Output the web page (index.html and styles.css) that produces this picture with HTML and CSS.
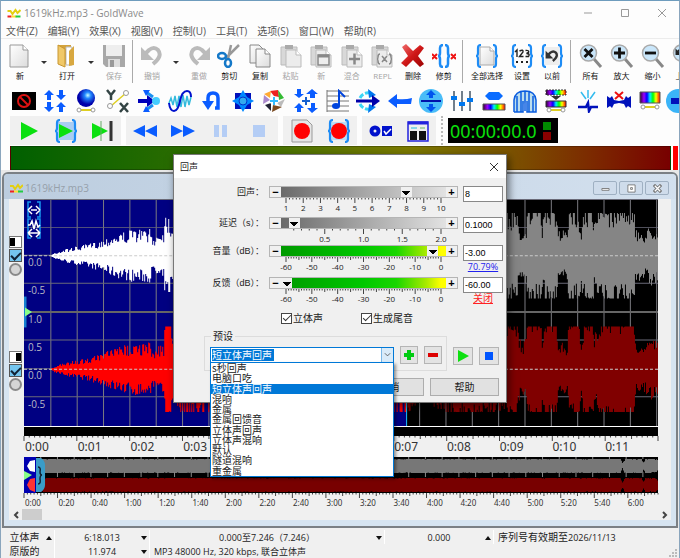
FILE: index.html
```html
<!DOCTYPE html>
<html lang="zh-CN">
<head>
<meta charset="utf-8">
<title>1619kHz.mp3 - GoldWave</title>
<link rel="stylesheet" href="styles.css">
</head>
<body>
<svg class="defs" aria-hidden="true">
  <defs>
    <linearGradient id="paper" x2="1" y2="1"><stop offset="0" stop-color="#fff"/><stop offset="1" stop-color="#dcdcdc"/></linearGradient>
    <linearGradient id="cross" x2="1" y2="1"><stop offset="0" stop-color="#f07070"/><stop offset=".5" stop-color="#d01818"/><stop offset="1" stop-color="#900"/></linearGradient>
    <linearGradient id="spectrum"><stop offset="0" stop-color="#303"/><stop offset=".2" stop-color="#90f"/><stop offset=".35" stop-color="#00f"/><stop offset=".5" stop-color="#0ef"/><stop offset=".65" stop-color="#0f0"/><stop offset=".8" stop-color="#ff0"/><stop offset="1" stop-color="#f00"/></linearGradient>
    <radialGradient id="ball" cx=".6" cy=".35"><stop offset="0" stop-color="#cff"/><stop offset=".35" stop-color="#28f"/><stop offset="1" stop-color="#00a"/></radialGradient>
    <symbol id="logo" viewBox="0 0 13 10"><path d="M0 3l3 0 2 3 3-4 2 3 3-3" fill="none" stroke="#e3cf10" stroke-width="2"/><path d="M0 8.500h4" stroke="#e22" stroke-width="2"/><path d="M4 8.500h5" stroke="#fd3" stroke-width="2"/><path d="M8 8.500h5" stroke="#2c4" stroke-width="2"/></symbol>
    <symbol id="braces" viewBox="0 0 24 24"><path d="M6 1q-3 0-3 3v5q0 3-2 3 2 0 2 3v5q0 3 3 3M18 1q3 0 3 3v5q0 3 2 3-2 0-2 3v5q0 3-3 3" fill="none" stroke="#1e8cf5" stroke-width="2.200"/></symbol>
    <symbol id="clip" viewBox="0 0 24 24"><path d="M2 3h16v18H2z" fill="#d8d8d8" stroke="#bbb"/><path d="M6 1h8v4H6z" fill="#aaa"/><path d="M7 6h10l5 5v12H7z" fill="#ececec" stroke="#bbb"/><path d="M17 6v5h5" fill="#fff" stroke="#bbb"/></symbol>
    <symbol id="lens" viewBox="0 0 24 24"><path d="M15 15l7 8" stroke="#888" stroke-width="3"/><circle cx="9.500" cy="9" r="8" fill="#c9e6fa" stroke="#aaa" stroke-width="1.500"/></symbol>
    <symbol id="undo" viewBox="0 0 24 24"><path d="M6 9l3-3q5-4 9 0 5 6-5 14" fill="none" stroke="currentColor" stroke-width="4"/><path d="M1 3v13h13z" fill="currentColor"/></symbol>
    <symbol id="rod" viewBox="0 0 20 6"><path d="M3 3h14" stroke="#dfcf20" stroke-width="2"/><circle cx="3" cy="3" r="2" fill="#fff" stroke="#999"/><circle cx="17" cy="3" r="2" fill="#fff" stroke="#999"/></symbol>
  </defs>
</svg>

<header class="titlebar">
  <svg class="logo"><use href="#logo"/></svg>
  <h1>1619kHz.mp3 - GoldWave</h1>
  <div class="window-buttons">
    <button aria-label="最小化"><svg viewBox="0 0 10 10"><path d="M1 5h8"/></svg></button>
    <button aria-label="最大化"><svg viewBox="0 0 10 10"><path d="M1.500 1.500h7v7h-7z"/></svg></button>
    <button aria-label="关闭"><svg viewBox="0 0 10 10"><path d="M1 1l8 8M9 1l-8 8"/></svg></button>
  </div>
</header>
<nav class="menu">
  <button>文件(Z)</button><button>编辑(Y)</button><button>效果(X)</button><button>视图(V)</button><button>控制(U)</button><button>工具(T)</button><button>选项(S)</button><button>窗口(W)</button><button>帮助(R)</button>
</nav>

<div class="toolbar">
  <button class="tool"><svg viewBox="0 0 24 24"><path d="M2 1h13l5 5v17H2z" fill="url(#paper)" stroke="#999"/><path d="M15 1v5h5" fill="#fff" stroke="#999"/></svg>新</button>
  <button class="more" aria-label="新建选项"></button>
  <button class="tool"><svg viewBox="0 0 24 24"><path d="M3 1h13v19H3z" fill="#d3a23c"/><path d="M11 3l6 0v18h-6z" fill="#fff" stroke="#bbb"/><path d="M3 1l7 4v18l-7-3z" fill="#f0c868" stroke="#c89630"/><path d="M14 7l5-5v19l-5 1z" fill="#d8a840"/></svg>打开</button>
  <button class="more" aria-label="打开选项"></button>
  <button class="tool" disabled><svg viewBox="0 0 24 24"><path d="M1 1h22v22H4l-3-3z" fill="#a8a8a8"/><path d="M4 1h16v11H4z" fill="#eee"/><path d="M6 15h12v8H6z" fill="#ddd"/><path d="M8 16h4v7H8z" fill="#999"/></svg>保存</button>
  <span class="rule"></span>
  <button class="tool" disabled><svg class="pale"><use href="#undo"/></svg>撤销</button>
  <button class="more" aria-label="撤销选项"></button>
  <button class="tool" disabled><svg class="pale" viewBox="0 0 24 24"><g transform="matrix(-1 0 0 1 24 0)"><use href="#undo" width="24" height="24"/></g></svg>重做</button>
  <div class="edit-group">
    <button class="tool"><svg viewBox="0 0 24 24"><path d="M22 1L8 15M14 1l-3 14" stroke="#999" stroke-width="2.500"/><ellipse cx="5" cy="12" rx="4" ry="3" fill="none" stroke="#1478c8" stroke-width="2.500"/><ellipse cx="11" cy="19" rx="3" ry="4" fill="none" stroke="#1478c8" stroke-width="2.500"/></svg>剪切</button>
    <button class="tool"><svg viewBox="0 0 24 24"><path d="M2 1h9l4 4v14H2z" fill="url(#paper)" stroke="#888"/><path d="M8 5h9l5 5v13H8z" fill="url(#paper)" stroke="#888"/><path d="M17 5v5h5" fill="#fff" stroke="#888"/></svg>复制</button>
    <button class="tool" disabled><svg><use href="#clip"/></svg>粘贴</button>
    <button class="tool" disabled><svg viewBox="0 0 24 24"><use href="#clip"/><path d="M9 11h11v10H9z" fill="#eee" stroke="#888" stroke-width="1.500"/><path d="M9 12h11" stroke="#888" stroke-width="3"/></svg>新</button>
    <button class="tool" disabled><svg viewBox="0 0 24 24"><use href="#clip"/><path d="M9 15h11M14.500 9.500v11" stroke="#888" stroke-width="2.500"/></svg>混合</button>
    <button class="tool" disabled><svg viewBox="0 0 24 24"><use href="#clip"/><path d="M10 10q-2 0-2 3 0 2-1 2 1 0 1 2 0 3 2 3M19 10q2 0 2 3 0 2 1 2-1 0-1 2 0 3-2 3M12 12l5 6M17 12l-5 6" fill="none" stroke="#888" stroke-width="1.500"/></svg>REPL</button>
    <button class="tool"><svg viewBox="0 0 24 24"><path d="M1 3l4-3 7 7 7-6 4 3-6 8 6 8-4 3-7-7-7 7-5-4 7-7z" fill="url(#cross)"/></svg>删除</button>
    <button class="tool"><svg viewBox="0 0 24 24"><path d="M11 1q-3 0-3 3v5q0 3-2 3 2 0 2 3v5q0 3 3 3M13 1q3 0 3 3v5q0 3 2 3-2 0-2 3v5q0 3-3 3" fill="none" stroke="#1e8cf5" stroke-width="2.500"/><path d="M0 10l5 5M5 10l-5 5M19 10l5 5M24 10l-5 5" stroke="#e11" stroke-width="2"/></svg>修剪</button>
  </div>
  <span class="rule"></span>
  <button class="tool wide"><svg viewBox="0 0 24 24"><path d="M5 3h10l4 4v14H5z" fill="url(#paper)" stroke="#aaa"/><path d="M15 3v4h4" fill="#fff" stroke="#aaa"/><use href="#braces"/></svg>全部选择</button>
  <button class="tool"><svg viewBox="0 0 24 24"><use href="#braces"/><path d="M5 8l2-2v7M9.500 7q4-2 3.500 1l-3.500 4.500h4M15.500 6.500q4-.5 3 2l-2 1q4 0 2 3h-3" fill="none" stroke="#222" stroke-width="1.400"/><path d="M6 18h2M11 18h2M16 18h2" stroke="#222" stroke-width="2"/></svg>设置</button>
  <button class="tool"><svg viewBox="0 0 24 24"><path d="M5 3h14v18H5z" fill="#eee"/><use href="#braces"/><g transform="translate(5 5) scale(.6)" color="#333"><use href="#undo" width="24" height="24"/></g></svg>以前</button>
  <span class="rule"></span>
  <div class="zoom-group">
    <button class="tool"><svg viewBox="0 0 24 24"><use href="#lens"/><path d="M5.500 5l8 8M13.500 5l-8 8" stroke="#111" stroke-width="2.800"/></svg>所有</button>
    <button class="tool"><svg viewBox="0 0 24 24"><use href="#lens"/><path d="M4 9h11M9.500 3.500v11" stroke="#111" stroke-width="2.800"/></svg>放大</button>
    <button class="tool"><svg viewBox="0 0 24 24"><use href="#lens"/><path d="M4 9h11" stroke="#111" stroke-width="2.800"/></svg>缩小</button>
    <button class="tool"><svg viewBox="0 0 24 24"><use href="#lens"/><g transform="translate(3 3) scale(.5)" color="#222"><use href="#undo" width="24" height="24"/></g></svg>上一</button>
  </div>
</div>

<div class="effects">
  <button aria-label="静音"><svg viewBox="0 0 24 24"><path d="M0 3h24v18H0z"/><circle cx="12" cy="12" r="6" fill="none" stroke="#d11" stroke-width="2"/><path d="M8 8l8 8" stroke="#d11" stroke-width="2"/></svg></button>
  <button aria-label="动态"><svg viewBox="0 0 24 24"><path d="M6 1l5 5H8v5H4V6H1zM18 13l5 5h-3v5h-4v-5h-3zM18 11l5-5h-3V1h-4v5h-3zM6 23l5-5H8v-5H4v5H1z" fill="#0a5cff"/></svg></button>
  <button aria-label="多普勒"><svg viewBox="0 0 24 24"><circle cx="12" cy="9" r="9" fill="url(#ball)"/><use href="#rod" x="2" y="18" width="20" height="6"/></svg></button>
  <button aria-label="动态曲线"><svg viewBox="0 0 24 24"><path d="M5 17L20 4" stroke="#dfcf20" stroke-width="1.500"/><circle cx="4" cy="17" r="2.500" fill="#fff" stroke="#999"/><circle cx="20" cy="4" r="2.500" fill="#fff" stroke="#999"/><path d="M1 1l4 5 4-5M5 6v5M14 14l8 9M22 14l-8 9" fill="none" stroke="#344" stroke-width="2.500"/></svg></button>
  <button aria-label="回声"><svg viewBox="0 0 24 24"><path d="M16 8L9 3M16 16l-7 5" stroke="#1a90f0" stroke-width="3"/><path d="M6 1h7l-4 6zM6 23h7l-4-6z" fill="#0a5cff"/><path d="M1 12h13" stroke="#00b" stroke-width="4"/><path d="M10 6l8 6-8 6z" fill="#00b"/><circle cx="19" cy="12" r="4" fill="#4cf"/></svg></button>
  <button aria-label="滤波"><svg viewBox="0 0 24 24" fill="none"><path d="M1 14l2-5 2 7 2-9 2 11 2-11 2 11 2-12 2 12 2-11 2 9 2-8" stroke="#3bd" stroke-width="1.500"/><path d="M1 14q1 8 5 8 4 0 6-10t7-10q4 0 4 6" stroke="#01c" stroke-width="2"/></svg></button>
  <button aria-label="翻转"><svg viewBox="0 0 24 24"><path d="M8 13V9q0-5 5-5t5 5v10h-3" fill="none" stroke="#0a5cff" stroke-width="3.500"/><path d="M2 12h12l-6 9z" fill="#0a5cff"/></svg></button>
  <button aria-label="机械化"><svg viewBox="0 0 24 24"><path d="M4 4h16v16H4z" fill="#01b"/><path d="M12 1l4 7 7 4-7 4-4 7-4-7-7-4 7-4z" fill="#08f"/><circle cx="12" cy="12" r="4" fill="#3ae" stroke="#03c"/></svg></button>
  <button aria-label="混音"><svg viewBox="0 0 24 24"><path d="M8 2l8-1 1 7-5-1z" fill="#e22"/><path d="M16 1l6 8-5 2z" fill="#3b3"/><path d="M23 10l-4 8-4-4z" fill="#bbb"/><path d="M20 18l-10 5 1-7z" fill="#7a4a20"/><path d="M9 22l-6-6 6-2z" fill="#223"/><path d="M1 15l1-9 6 5z" fill="#a8c"/><path d="M2 5l7-3-1 7z" fill="#fa3"/><circle cx="12" cy="12" r="4" fill="#fff"/><path d="M12 8v8M8 12h8" stroke="#3bf" stroke-width="2"/></svg></button>
  <button aria-label="偏移"><svg viewBox="0 0 24 24"><path d="M5 9l5-4H7V0H3v5H0zM18 0l6 5h-3v4h-5V5h-4zM5 14l5 5H7v4H3v-4H0zM18 24l6-5h-3v-5h-4v5h-4z" fill="#0a5cff"/><path d="M12 8v8M8 12h8" stroke="#1560d0" stroke-width="2"/></svg></button>
  <button aria-label="音高"><svg viewBox="0 0 24 24"><path d="M2 2h22M2 7h22M2 12h22M2 17h22M2 22h22M2 1v22" stroke="#777"/><path d="M14 17V2l6 6" fill="none" stroke="#04d" stroke-width="2"/><ellipse cx="11" cy="17" rx="4" ry="3" fill="#04d"/></svg></button>
  <button aria-label="混响"><svg viewBox="0 0 24 24"><path d="M4 9q3-6 10-5M4 15q3 6 10 5" fill="none" stroke="#3bd5f5" stroke-width="3" stroke-dasharray="5 2"/><path d="M12 0l8 6-7 3zM12 24l8-6-7-3z" fill="#07e"/><path d="M0 12h18" stroke="#00a" stroke-width="3"/><path d="M16 6l8 6-8 6z" fill="#00a"/></svg></button>
  <button aria-label="反向"><svg viewBox="0 0 24 24"><path d="M0 12l9-7v5q8 1 15-1l-1 6H9v4z" fill="#0a5cff"/></svg></button>
  <button aria-label="音量"><svg viewBox="0 0 24 24"><circle cx="12" cy="12" r="12" fill="#4abdf8"/><path d="M2 12h20" stroke="#01a" stroke-width="2"/><path d="M12 1l5 5h-3v3h-4V6H7zM12 23l5-5h-3v-3h-4v3H7z" fill="#05e"/></svg></button>
  <button aria-label="均衡器"><svg viewBox="0 0 24 24"><path d="M4 2v20M12 2v20M20 2v20" stroke="#456" stroke-width="1.500"/><path d="M1 9h6M9 15h6M17 11h6" stroke="#07e" stroke-width="4"/></svg></button>
  <button aria-label="频谱滤波"><svg viewBox="0 0 24 24"><path d="M3 7l4-4h10l4 4-4 4H7z" fill="#0a6cff"/><path d="M1 15h22v6H1z" fill="url(#spectrum)" stroke="#555"/></svg></button>
  <button aria-label="门限"><svg viewBox="0 0 24 24"><path d="M1 23V11Q2 2 12 2t11 9v12h-9V12M12 2v20M10 12v11H1M8 3v20M4 7v16M16 3v20M20 7v16" fill="#bde" stroke="#0a5cdf" stroke-width="1.500"/></svg></button>
  <button aria-label="降噪"><svg viewBox="0 0 24 24"><path d="M2 1h20v5H2z" fill="url(#spectrum)" stroke="#333" stroke-dasharray="2 1"/><path d="M7 7h10l-5 4z" fill="#333"/><path d="M2 12h20v6H2z" fill="url(#spectrum)" stroke="#333"/><use href="#rod" x="2" y="18" width="20" height="6"/></svg></button>
  <button aria-label="爆音"><svg viewBox="0 0 24 24"><path d="M5 3l5 7M12 1v8M19 3l-5 7" stroke="#3be" stroke-width="1.500"/><path d="M2 18h8l2-4 1 8 2-4h7" fill="none" stroke="#01b" stroke-width="2.500"/></svg></button>
  <button aria-label="静音修剪"><svg viewBox="0 0 24 24"><path d="M0 7l3 2 2-2 2 4 5 1 5-1 2-4 2 2 3-2v12l-3-2-2 2-2-4-5-1-5 1-2 4-2-2-3 2z" fill="#01b"/><path d="M8 3l8 7M16 3l-8 7" stroke="#e11" stroke-width="2"/></svg></button>
  <button aria-label="频谱"><svg viewBox="0 0 24 24"><path d="M2 3h20v11H2z" fill="url(#spectrum)" stroke="#555"/><use href="#rod" x="2" y="15" width="20" height="6"/></svg></button>
  <button class="cut" aria-label="立体声"><svg viewBox="0 0 24 24"><circle cx="12" cy="12" r="12" fill="#3ab4f8"/><path d="M5 9h14v6H5z" fill="#01b"/></svg></button>
</div>

<div class="transport">
  <div class="group g3">
    <button aria-label="播放"><svg viewBox="0 0 24 24"><path d="M4 3l17 9-17 9z" fill="#0be010"/></svg></button>
    <button aria-label="播放选区"><svg viewBox="0 0 24 24"><path d="M4 3h16v18H4z" fill="#a9cdf3"/><path d="M5 5l14 7-14 7z" fill="#0be010"/><use href="#braces"/></svg></button>
    <button aria-label="播放到结尾"><svg viewBox="0 0 24 24"><path d="M1 4l16 8-16 8z" fill="#0be010"/><path d="M10 2v20" stroke="#6a6"/><path d="M20 2v20" stroke="#333" stroke-width="3"/></svg></button>
  </div>
  <div class="group g4">
    <button aria-label="后退"><svg viewBox="0 0 24 24"><path d="M12 6v12L0 12zM24 6v12l-12-6z" fill="#0a5cff"/></svg></button>
    <button aria-label="前进"><svg viewBox="0 0 24 24"><path d="M0 6v12l12-6zM12 6v12l12-6z" fill="#0a5cff"/></svg></button>
    <button aria-label="暂停"><svg viewBox="0 0 24 24"><path d="M5 6h5v12H5zM13 6h5v12h-5z" fill="#b4cdf5"/></svg></button>
    <button aria-label="停止"><svg viewBox="0 0 24 24"><path d="M6 6h12v12H6z" fill="#b4cdf5"/></svg></button>
  </div>
  <div class="group g2">
    <button aria-label="录音"><svg viewBox="0 0 24 24"><path d="M2 1h15l5 5v17H2z" fill="#e5e5e5" stroke="#999"/><circle cx="12" cy="12" r="8" fill="#f00"/></svg></button>
    <button aria-label="录制选区"><svg viewBox="0 0 24 24"><path d="M4 3h16v18H4z" fill="#b9dcf5"/><use href="#braces"/><circle cx="12" cy="12" r="8" fill="#f00"/></svg></button>
  </div>
  <div class="group g2">
    <button aria-label="选项"><svg viewBox="0 0 24 24"><circle cx="6" cy="12" r="3.500" fill="none" stroke="#01c" stroke-width="4"/><path d="M13 7h10v10H13z" fill="#01c"/><path d="M15 12l2 3 5-5" fill="none" stroke="#fff" stroke-width="1.500"/></svg></button>
    <button aria-label="控制面板"><svg viewBox="0 0 24 24"><path d="M2 3h20v19H2z" fill="#eee" stroke="#22d" stroke-width="1.500"/><path d="M2 4h20" stroke="#22d" stroke-width="3"/><path d="M4 12h7v9H4zM13 12h7v9h-7z" fill="#111"/><path d="M5 9h6" stroke="#2bd"/><path d="M14 9h5" stroke="#6b6"/></svg></button>
  </div>
  <span class="grip"></span>
  <output class="clock">00:00:00.0<span class="leds"><i></i><i></i></span></output>
</div>
<div class="meter"><span class="level"></span><span class="peak"></span></div>

<main class="desk">
  <section class="child">
    <header class="child-title">
      <svg class="logo"><use href="#logo"/></svg>
      <h2>1619kHz.mp3</h2>
      <button aria-label="最小化"><svg viewBox="0 0 10 10"><path d="M1 5h8v2H1z"/></svg></button>
      <button aria-label="还原"><svg viewBox="0 0 10 10"><path d="M1 1h8v8H1zM4 4h2v2H4z"/></svg></button>
      <button aria-label="关闭"><svg viewBox="0 0 10 10"><path d="M1 1l8 8M9 1l-8 8" stroke-width="3.500"/><path d="M2 2l6 6M8 2l-6 6" stroke="#fff" stroke-width="1.500"/></svg></button>
    </header>
    <div class="child-body">
      <div class="channels">
        <div class="channel"><span class="side left"></span><input type="checkbox" checked aria-label="左声道"><input type="radio" name="solo" aria-label="仅左声道"></div>
        <div class="channel"><span class="side right"></span><input type="checkbox" checked aria-label="右声道"><input type="radio" name="solo" aria-label="仅右声道"></div>
      </div>
      <div class="tracks">
        <div class="plot">
          <svg id="wave" viewBox="0 0 633 228" preserveAspectRatio="none"></svg>
          <div class="scale"><span></span><span></span><span>0.0</span><span>-0.5</span><span>1.0</span><span>0.5</span><span>0.0</span><span>-0.5</span></div>
          <svg class="cues" viewBox="0 0 16 38"><path d="M5 1H2v15h3M11 1h3v15h-3M5 18H2v19h3M11 18h3v19h-3" fill="none" stroke="#1696f0" stroke-width="1.500"/><path d="M2 9l4-4M2 9l4 4M14 9l-4-4M14 9l-4 4M5 9h6M2 24h2l2-4 2 8 2-8 2 6 2-2M2 32l4-4M2 32l4 4M14 32l-4-4M14 32l-4 4M2 32h12" fill="none" stroke="#fff" stroke-width="1.500"/></svg>
        </div>
        <svg class="strip ticks" data-major="12" data-minor="10"></svg>
        <div class="times"><span>0:00</span><span>0:01</span><span>0:02</span><span>0:03</span><span>0:04</span><span>0:05</span><span>0:06</span><span>0:07</span><span>0:08</span><span>0:09</span><span>0:10</span><span>0:11</span></div>
        <svg id="overview" viewBox="0 0 633 36" preserveAspectRatio="none"></svg>
        <svg class="ticks" data-major="19" data-minor="10"></svg>
        <div class="times small"><span>0:00</span><span>0:20</span><span>0:40</span><span>1:00</span><span>1:20</span><span>1:40</span><span>2:00</span><span>2:20</span><span>2:40</span><span>3:00</span><span>3:20</span><span>3:40</span><span>4:00</span><span>4:20</span><span>4:40</span><span>5:00</span><span>5:20</span><span>5:40</span><span>6:00</span></div>
      </div>
      <div class="scroll"><button aria-label="向左"><svg viewBox="0 0 6 8"><path d="M5 1L2 4l3 3"/></svg></button><span class="thumb"></span><button aria-label="向右"><svg viewBox="0 0 6 8"><path d="M1 1l3 3-3 3"/></svg></button></div>
    </div>
  </section>
</main>

<footer class="status">
  <div class="cell big">立体声<i class="tri up"></i></div>
  <div class="cell mid">6:18.013<i class="tri"></i></div>
  <div class="cell mid">0.000至7.246（7.246）<i class="tri"></i></div>
  <div class="cell mid">0.000<i class="tri up"></i></div>
  <div class="cell text"><span><b>序列号有效期至</b>2026/11/13</span></div>
  <div class="cell big">原版的</div>
  <div class="cell mid">11.974<i class="tri"></i></div>
  <div class="cell text rest"><span>MP3 48000 Hz, 320 kbps, 联合立体声</span></div>
  <svg class="resize" viewBox="0 0 8 8"><path d="M6 0h2v2H6zM3 3h2v2H3zM6 3h2v2H6zM0 6h2v2H0zM3 6h2v2H3zM6 6h2v2H6z" fill="#bbb"/></svg>
</footer>

<div class="dialog" role="dialog" aria-labelledby="dialog-title">
  <header>
    <h2 id="dialog-title">回声</h2>
    <button aria-label="关闭对话框"><svg viewBox="0 0 10 10"><path d="M1 1l8 8M9 1l-8 8"/></svg></button>
  </header>
  <div class="params">
    <label for="echo">回声：</label>
    <div class="slider gray"><div class="bar"><button aria-label="减少回声">−</button><input id="echo" type="range" min="1" max="10" step="1" value="8"><button aria-label="增加回声">+</button></div>
      <svg class="ticks" data-major="9" data-minor="5"></svg><div class="marks"><span>1</span><span>2</span><span>3</span><span>4</span><span>5</span><span>6</span><span>7</span><span>8</span><span>9</span><span>10</span></div></div>
    <div class="value"><input type="text" value="8" aria-label="回声值"></div>

    <label for="delay">延迟（s）：</label>
    <div class="slider gray"><div class="bar"><button aria-label="减少延迟">−</button><input id="delay" type="range" min="0" max="2" step="0.1" value="0.1"><button aria-label="增加延迟">+</button></div>
      <svg class="ticks" data-major="4" data-minor="5" data-skip="1"></svg><div class="marks"><span></span><span>0.5</span><span>1.0</span><span>1.5</span><span>2.0</span></div></div>
    <div class="value"><input type="text" value="0.1000" aria-label="延迟值"></div>

    <label for="volume">音量（dB）：</label>
    <div class="slider level-bar"><div class="bar"><button aria-label="减少音量">−</button><input id="volume" type="range" min="-60" max="0" step="1" value="-3"><button aria-label="增加音量">+</button></div>
      <svg class="ticks" data-major="6" data-minor="10"></svg><div class="marks"><span>-60</span><span>-50</span><span>-40</span><span>-30</span><span>-20</span><span>-10</span><span>0</span></div></div>
    <div class="value"><input type="text" value="-3.00" aria-label="音量值"><a href="#volume">70.79%</a></div>

    <label for="feedback">反馈（dB）：</label>
    <div class="slider level-bar"><div class="bar"><button aria-label="减少反馈">−</button><input id="feedback" type="range" min="-60" max="0" step="1" value="-60"><button aria-label="增加反馈">+</button></div>
      <svg class="ticks" data-major="6" data-minor="10"></svg><div class="marks"><span>-60</span><span>-50</span><span>-40</span><span>-30</span><span>-20</span><span>-10</span><span>0</span></div></div>
    <div class="value"><input type="text" value="-60.00" aria-label="反馈值"><a class="off" href="#feedback">关闭</a></div>
  </div>
  <div class="checks">
    <label><input type="checkbox" checked>立体声</label>
    <label><input type="checkbox" checked>生成尾音</label>
  </div>
  <div class="preset-row">
    <fieldset>
      <legend>预设</legend>
      <div class="combo">
        <select aria-label="预设"><option>短立体声回声</option></select>
        <svg class="chevron" viewBox="0 0 8 8"><path d="M1 2l3 3 3-3"/></svg>
        <ul role="listbox" aria-label="预设列表">
          <li role="option">s秒回声</li><li role="option">电脑口吃</li><li role="option" aria-selected="true">短立体声回声</li><li role="option">混响</li><li role="option">金属</li><li role="option">金属回馈音</li><li role="option">立体声回声</li><li role="option">立体声混响</li><li role="option">默认</li><li role="option">隧道混响</li><li role="option">重金属</li>
        </ul>
      </div>
      <button aria-label="添加预设"><svg viewBox="0 0 12 12"><path d="M4 1h4v3h3v4H8v3H4V8H1V4h3z" fill="#0c1"/></svg></button>
      <button aria-label="删除预设"><svg viewBox="0 0 12 12"><path d="M1 4h10v4H1z" fill="#d00"/></svg></button>
    </fieldset>
    <button class="play" aria-label="试听"><svg viewBox="0 0 12 12"><path d="M1 0l11 6-11 6z" fill="#0de010"/></svg></button>
    <button class="play" aria-label="停止试听"><svg viewBox="0 0 12 12"><path d="M2 2h8v8H2z" fill="#05f"/></svg></button>
  </div>
  <div class="actions"><button>确定</button><button>取消</button><button>帮助</button></div>
</div>
<script src="wave.js"></script>
</body>
</html>
```

FILE: styles.css
```css
* { box-sizing: border-box; }
body {
  margin: 0;
  min-height: 100vh;
  display: flex;
  flex-direction: column;
  position: relative;
  overflow-x: hidden;
  background: #fdfdfd;
  border: 1px solid #8aa5bd;
  border-top-color: #6e9cbd;
  border-bottom-color: #b5aa98;
  font: 10px/12px "Open Sans", "Noto Sans CJK SC", sans-serif;
  color: #222;
}
button { font: inherit; color: inherit; background: none; border: 0; padding: 0; }
h1, h2 { margin: 0; font-weight: 400; }
input { margin: 0; }
.defs { position: absolute; width: 0; height: 0; }

.titlebar { display: flex; align-items: center; height: 23px; padding: 0 12px 0 6px; gap: 3px; }
.logo { width: 14px; height: 10px; }
.titlebar h1 { flex: 1; font-size: 10px; color: #8a8a8a; }
.window-buttons { display: flex; gap: 27px; padding-left: 1px; }
.window-buttons svg { display: block; width: 10px; height: 10px; fill: none; stroke: #999; }

.menu { display: flex; gap: 10px; height: 15px; padding-left: 5px; border-bottom: 1px solid #ececec; color: #555; }
.menu button { white-space: nowrap; }

.toolbar { display: flex; height: 47px; padding: 5px 0 0 4px; font-size: 8px; line-height: 10px; overflow: hidden; }
.tool { display: flex; flex-direction: column; align-items: center; flex: 0 0 30px; gap: 3px; white-space: nowrap; color: #111; }
.tool:disabled { color: #a5a5a5; }
.tool svg { width: 24px; height: 24px; flex: none; }
.tool.wide { flex-basis: 40px; }
.pale { color: #bbb; }
.more { flex: 0 0 17px; display: flex; align-items: flex-start; justify-content: center; padding-top: 17px; }
.more::before { content: ""; border: 3px solid transparent; border-top-color: #333; border-bottom: 0; }
.rule { flex: 0 0 1px; height: 43px; margin: -4px 4px 0 3px; background: #aaa; }
.edit-group { display: flex; flex: 0 0 245px; }
.edit-group .tool { flex: 1; }
.zoom-group { display: flex; flex: 0 0 124px; }
.zoom-group .tool { flex: 1; }

.effects { display: grid; grid-template-columns: repeat(21, 1fr) 13px; height: 29px; padding-left: 7px; align-items: center; justify-items: center; overflow: hidden; }
.effects .cut { justify-self: start; }
.effects svg { display: block; width: 24px; height: 24px; }

.transport { display: flex; height: 31px; padding: 1px 0 1px 9px; gap: 5px; }
.group { display: grid; align-items: center; justify-items: center; background: #f0f0f0; }
.g3 { grid-template-columns: repeat(3, 37px); }
.g4 { grid-template-columns: repeat(4, 38px); }
.g2 { grid-template-columns: repeat(2, 37px); }
.group svg { display: block; width: 24px; height: 24px; }
.grip { border-left: 2px dotted #bbb; }
.clock { display: flex; align-items: center; gap: 6px; height: 25px; margin-top: 2px; padding: 0 7px 0 2px; background: #000; color: #0be00b; font: 18px/24px "Noto Sans", sans-serif; }
.leds { display: grid; gap: 2px; }
.leds i { width: 8px; height: 8px; background: #008a00; }
.leds i:last-child { background: #8a0000; }

.meter { display: flex; gap: 2px; height: 24px; padding: 0 1px 0 9px; }
.level { flex: 1; background: linear-gradient(90deg, #006000, #3a7000 35%, #7b7a00 60%, #7b5800 74%, #7c2a00 88%, #780000); border: 1px solid #00000040; }
.peak { width: 5px; background: #f00; }

.desk { flex: 1; display: flex; background: #e8e8e8; padding: 2px 1px 0; }
.child { flex: 1; display: flex; flex-direction: column; min-width: 0; padding: 0 5px 6px; background: #d6e4f1; border: 2px solid #7b8085; border-radius: 6px 6px 0 0; }
.child-title { display: flex; align-items: center; height: 25px; gap: 2px; margin: 0 -5px; padding: 3px 7px 0 6px; background: linear-gradient(90deg, #bccddf, #d3e0ee); color: #96a0aa; border-radius: 4px 4px 0 0; }
.child-title h2 { flex: 1; font-size: 10px; line-height: 12px; }
.child-title button { display: grid; place-items: center; width: 24px; height: 14px; border: 1px solid #9fb0c2; border-radius: 2px; background: #cfdceb; }
.child-title svg { width: 9px; height: 9px; fill: #fff; stroke: #777; }
.child-title .logo { width: 13px; height: 10px; stroke: none; }
.child-body { flex: 1; display: grid; grid-template-columns: 15px 1fr 13px; grid-template-rows: 1fr auto; background: #f0f0f0; }
.channels { display: flex; flex-direction: column; }
.channel { display: flex; flex-direction: column; gap: 1px; height: 115px; padding-top: 37px; }
.side { width: 13px; height: 12px; border: 1px solid #777; background: linear-gradient(#000 0 0) 0 50% / 5px 8px no-repeat #fff; }
.side.right { background-position: 100% 50%; }
.channel input { appearance: none; width: 13px; height: 13px; border: 1px solid #555; }
.channel input[type="radio"] { border: 2px solid #8a8a8a; border-radius: 50%; background: #d5d5d5; }
.channel input[type="checkbox"] { display: grid; place-items: center; background: #74c5ee; }
.channel input[type="checkbox"]::before { content: ""; width: 8px; height: 4px; border: solid #123; border-width: 0 0 2px 2px; transform: translateY(-1px) rotate(-45deg); }
.tracks { min-width: 0; }
.plot { position: relative; height: 228px; background: #000; border-bottom: 1px solid #fff; }
.plot #wave { display: block; width: 100%; height: 100%; }
.scale { position: absolute; inset: 0 auto 0 4px; display: grid; grid-template-rows: repeat(8, 1fr); color: #b9b9c4; line-height: 12px; }
.cues { position: absolute; left: 2px; top: 2px; width: 16px; height: 38px; }
.ticks { display: block; width: 100%; height: 5px; }
.strip { height: 14px; padding-top: 9px; background: linear-gradient(#000 9px, transparent 0); }
.times { display: grid; grid-template-columns: repeat(12, 1fr); height: 16px; padding-left: 1px; line-height: 12px; font-size: 12px; font-family: "Noto Sans", sans-serif; color: #333; }
.times span { min-width: 0; }
.times.small { grid-template-columns: repeat(18, 10fr) 9fr; height: 11px; font-size: 8px; line-height: 9px; }
#overview { display: block; width: 100%; height: 36px; background: #000; }
.scroll { grid-column: 1 / -1; display: flex; align-items: center; height: 11px; }
.scroll button { width: 13px; height: 11px; display: grid; place-items: center; }
.scroll svg { width: 6px; height: 8px; fill: none; stroke: #444; stroke-width: 2; }
.thumb { width: 20px; height: 11px; margin-right: auto; background: #cdcdcd; }

.status { position: relative; display: grid; grid-template-columns: 54px 95px 235px 109px 1fr; grid-auto-rows: 14px; height: 31px; padding-top: 2px; background: #f0f0f0; font-size: 9px; line-height: 15px; }
.cell { position: relative; display: flex; justify-content: center; border-right: 1px solid #fff; white-space: nowrap; }
.cell.text { justify-content: flex-start; padding-left: 4px; border: 0; }
.cell.rest { grid-column: 3 / -1; }
.cell.big, .cell b { font-size: 10px; font-weight: 400; }
.cell.big { padding-right: 6px; }
.tri { position: absolute; right: 2px; top: 6px; border: 3px solid transparent; border-top: 4px solid #111; border-bottom: 0; }
.tri.up { border-top: 0; border-bottom: 4px solid #111; }
.resize { position: absolute; right: 2px; bottom: 2px; width: 8px; height: 8px; }

.dialog { position: absolute; left: 172px; top: 153px; width: 334px; background: #f0f0f0; border: 1px solid #777; box-shadow: 2px 3px 8px #0008; padding-bottom: 6px; }
.dialog > header { display: flex; align-items: center; justify-content: space-between; height: 23px; padding: 0 7px 0 6px; background: #fff; }
.dialog h2 { font-size: 9px; }
.dialog > header svg { display: block; width: 10px; height: 10px; fill: none; stroke: #333; }
.params { display: grid; grid-template-columns: 90px 189px 40px; column-gap: 5px; grid-template-rows: 31px 28px 32px 32px; padding-top: 8px; font-size: 9px; }
.params label { text-align: right; white-space: nowrap; line-height: 12px; font-family: "Liberation Sans", "Noto Sans CJK SC", sans-serif; }
.bar { display: flex; height: 12px; border: 1px solid #b5b5b5; }
.bar button { width: 11px; font: bold 11px/10px "Liberation Sans", sans-serif; color: #000; }
.bar input { appearance: none; flex: 1; min-width: 0; height: 10px; }
.gray input { background: linear-gradient(90deg, #6a6a6a, #e2e2e2); }
.level-bar input { background: linear-gradient(90deg, #009a00, #00c800 50%, #1ad600 70%, #a8ea00 88%, #ff0 97%); }
.bar input::-webkit-slider-thumb { appearance: none; width: 11px; height: 10px; background: conic-gradient(from -45deg at 50% 100%, #000 90deg, #0000 0) 50% 60% / 8px 4px no-repeat #f0f0f0; }
.slider .ticks { width: 155px; height: 5px; margin: 0 17px; }
.marks { display: flex; justify-content: space-between; margin: 0 17px; font-size: 8px; line-height: 9px; }
.marks span { display: flex; justify-content: center; width: 0; }
.value { display: flex; flex-direction: column; align-items: center; line-height: 12px; }
.value input { width: 40px; height: 16px; border: 1px solid #888; background: #fff; padding: 0 1px; font: 9px/12px "Liberation Sans", sans-serif; flex: none; }
.value a { color: #22e; font-size: 9px; line-height: 11px; }
.value a.off { color: #f22; font-size: 10px; }
.checks { display: grid; grid-template-columns: 80px 80px; padding-left: 107px; margin-top: 3px; font-size: 10px; }
.checks label { display: flex; align-items: center; gap: 1px; }
.checks input { appearance: none; display: grid; place-items: center; width: 11px; height: 11px; border: 1px solid #444; background: #fff; }
.checks input::before { content: ""; width: 7px; height: 3px; border: solid #333; border-width: 0 0 1px 1px; transform: translateY(-1px) rotate(-45deg); }
.preset-row { display: flex; align-items: flex-end; gap: 6px; margin-top: 6px; padding-left: 30px; }
fieldset { display: flex; align-items: center; gap: 6px; width: 243px; margin: 0; padding: 4px 4px 6px 5px; border: 1px solid #dcdcdc; min-width: 0; }
legend { padding: 0 2px; margin-left: 1px; font-size: 10px; line-height: 12px; }
.combo { position: relative; flex: 1; height: 16px; }
.combo select { appearance: none; display: block; width: 100%; height: 16px; padding: 0 16px 0 1px; border: 1px solid #0078d7; border-radius: 0; color: #fff; background: linear-gradient(#0078d7 0 0) 1px 1px / 62px 12px no-repeat #fff; font: 10px/14px "Noto Sans CJK SC", sans-serif; }
.chevron { position: absolute; right: 1px; top: 1px; width: 12px; height: 14px; padding: 3px 2px; background: #d9ebf9; fill: none; stroke: #555; border-left: 1px solid #7ab8e8; }
.combo ul { position: absolute; z-index: 2; left: 0; right: 0; top: 15px; height: 115px; margin: 0; padding: 0; list-style: none; display: flex; flex-direction: column; background: #fff; border: 1px solid #0078d7; box-shadow: 2px 2px 3px #0006; }
.combo li { flex: 1; padding-left: 1px; font: 10px/10px "Noto Sans CJK SC", sans-serif; }
.combo li[aria-selected] { background: #0078d7; color: #fff; }
fieldset button, .play { display: grid; place-items: center; width: 18px; height: 18px; border: 1px solid #b5b5b5; background: #e3e3e3; flex: none; }
.play { width: 20px; margin-bottom: 6px; }
fieldset svg, .play svg { width: 12px; height: 12px; }
.actions { display: flex; justify-content: flex-end; gap: 6px; margin-top: 7px; padding-right: 7px; }
.actions button { width: 69px; height: 18px; border: 1px solid #adadad; background: #e1e1e1; font-size: 10px; line-height: 14px; }
```

FILE: wave.js
```js
const NS = 'http://www.w3.org/2000/svg';

function add(parent, tag, attrs) {
  const el = document.createElementNS(NS, tag);
  for (const k in attrs) el.setAttribute(k, attrs[k]);
  parent.appendChild(el);
  return el;
}

let seed = 7;
function rnd() {
  seed = (seed * 16807) % 2147483647;
  return seed / 2147483647;
}

// Linear interpolation over [x, height] pairs.
function level(env, x) {
  for (let i = 1; i < env.length; i++) {
    if (x <= env[i][0]) {
      const [x0, a] = env[i - 1], [x1, b] = env[i];
      return a + (b - a) * (x - x0) / (x1 - x0);
    }
  }
  return env[env.length - 1][1];
}

function shape(env, mid, from, to, limit, rough) {
  let top = '', bottom = '';
  for (let x = from; x < to; x++) {
    const e = level(env, x);
    const u = Math.min(limit, e * (1 - rough * rnd()));
    const d = Math.min(limit, e * (1 - rough * rnd()));
    top += `L${x} ${(mid - u).toFixed(1)}H${x + 1}`;
    bottom = `L${x + 1} ${(mid + d).toFixed(1)}H${x}` + bottom;
  }
  return `M${from} ${mid}${top}${bottom}Z`;
}

const wave = document.getElementById('wave');
const SEL = 382;
add(wave, 'rect', { width: SEL, height: 228, fill: '#000082' });
for (let i = 1; i <= 24; i++) add(wave, 'path', { d: `M${i * 26.3 + 0.5} 0V228`, stroke: '#7a7a80', 'stroke-width': 1 });
for (const y of [1, 29, 57, 85, 142, 171, 199]) add(wave, 'path', { d: `M0 ${y - 0.5}H633`, stroke: '#6a6a78' });
add(wave, 'path', { d: 'M0 113.5H633', stroke: '#666', 'stroke-width': 2 });

const env = [[0, 0], [26, 0], [30, 3], [45, 8], [56, 10], [75, 15], [90, 22], [110, 27], [125, 27], [128, 18], [137, 27],
  [139, 26], [141, 46], [143, 44], [148, 30], [160, 50], [175, 50], [190, 38], [230, 50], [290, 36], [330, 50], [382, 46], [400, 30], [430, 50],
  [480, 46], [490, 50], [496, 25], [501, 32], [503, 56], [515, 56], [517, 34], [520, 56], [531, 56], [533, 30],
  [542, 24], [544, 54], [553, 54], [556, 32], [560, 56], [567, 56], [569, 36], [575, 52], [580, 54], [608, 58], [610, 26], [620, 24], [625, 32], [633, 28]];
const red = env.map(([x, h]) => [x, x > 139 && x < 146 ? 90 : h > 48 ? h + 8 : h]);

add(wave, 'path', { d: shape(env, 57, 0, SEL, 43, 0.5), fill: '#fff' });
add(wave, 'path', { d: shape(env, 57, SEL, 633, 43, 0.5), fill: '#858585' });
add(wave, 'path', { d: shape(red, 171, 0, SEL, 43, 0.5), fill: '#f00' });
add(wave, 'path', { d: shape(red, 171, SEL, 633, 43, 0.45), fill: '#800000' });
add(wave, 'path', { d: 'M0 57H633M0 171H633', stroke: '#ccc', 'stroke-dasharray': '3 2', 'stroke-width': 1 });
add(wave, 'path', { d: `M${SEL} 0V228`, stroke: '#1bc0ff' });
add(wave, 'path', { d: 'M1 98V129', stroke: '#1680d0', 'stroke-width': 3 });
add(wave, 'path', { d: 'M1 109L8 113.500L1 118Z', fill: '#8f8' });

const view = document.getElementById('overview');
const flat = [[0, 9], [595, 9], [597, 3], [600, 9], [616, 9], [618, 4], [620, 9], [628, 8], [633, 6]];
add(view, 'path', { d: shape(flat, 9, 0, 633, 7, 0.3), fill: '#777' });
add(view, 'path', { d: shape(flat, 28, 0, 633, 7, 0.3), fill: '#780000' });
for (let i = 1; i < 38; i++) add(view, 'path', { d: `M${i * 16.7} 15V20M${i * 16.7} 0V2`, stroke: '#888' });
add(view, 'rect', { width: 12, height: 36, fill: '#0000b0' });
add(view, 'path', { d: 'M3 9L6 4L11 3V15L6 14Z', fill: '#fff' });
add(view, 'path', { d: 'M3 28L6 22L11 21V35L6 33Z', fill: '#f33' });
add(view, 'path', { d: 'M0 14L8 18L0 23Z', fill: '#8f8' });
add(view, 'path', { d: 'M12 1H17Q21 4 21 8V28Q21 32 17 35H12Z', fill: '#3a9cc8' });
add(view, 'path', { d: 'M14 10Q17 10 16 15Q16 18 18 18Q16 18 16 22Q17 27 14 27', fill: 'none', stroke: '#123', 'stroke-width': 1.5 });

for (const svg of document.querySelectorAll('.ticks')) {
  const major = +svg.dataset.major, minor = +svg.dataset.minor, n = major * minor;
  const span = svg.dataset.major === '19' ? 18.9 * minor : n;
  svg.setAttribute('viewBox', '0 0 1000 5');
  svg.setAttribute('preserveAspectRatio', 'none');
  svg.style.overflow = 'visible';
  let d = '';
  for (let i = +(svg.dataset.skip || 0); i <= span; i++) {
    const x = (i / span * 1000).toFixed(1);
    d += `M${x} 0V${i % minor === 0 ? 5 : i % (minor / 2) === 0 ? 3 : 1.5}`;
  }
  add(svg, 'path', { d, stroke: '#444', 'stroke-width': 1, 'vector-effect': 'non-scaling-stroke' });
}
```
